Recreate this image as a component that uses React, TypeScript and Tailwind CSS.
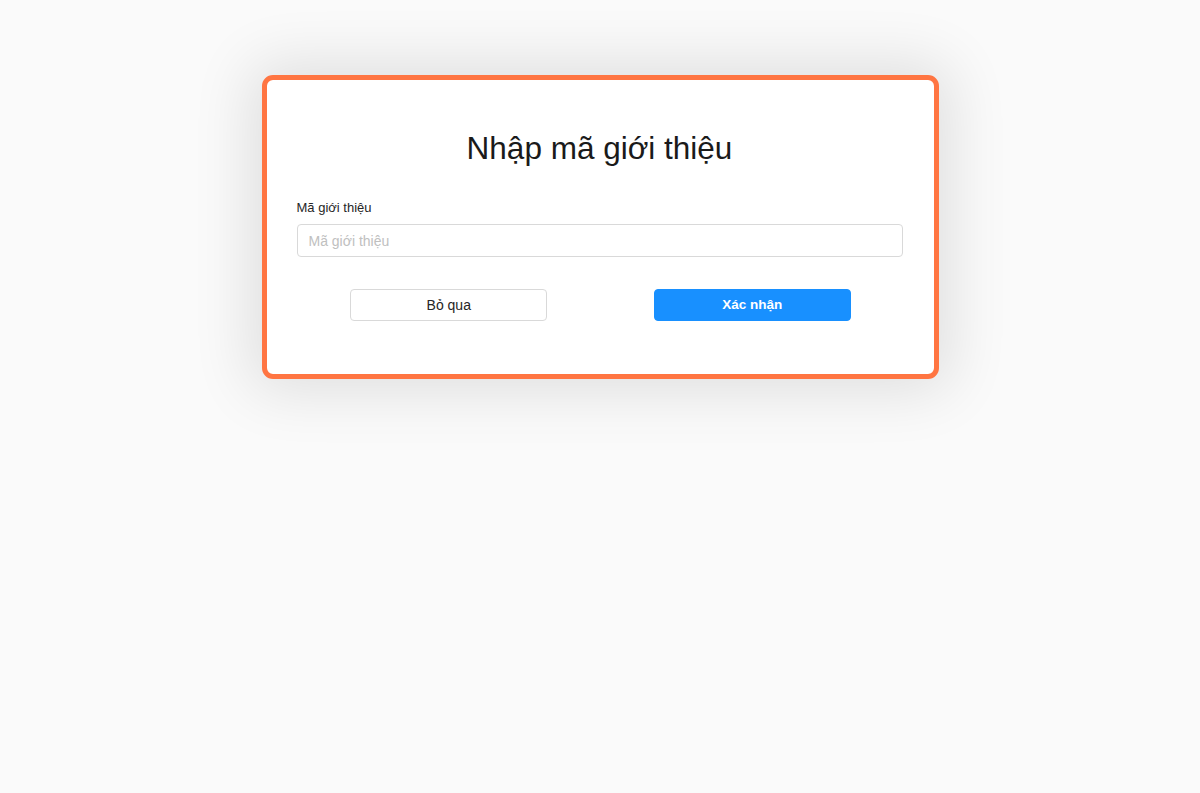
import React from "react";

export default function App() {
  return (
    <div className="min-h-[793px] w-full bg-[#fafafa] pt-[75px]" style={{ fontFamily: '"Liberation Sans", Arial, sans-serif' }}>
      <div className="mx-auto w-[677px] rounded-[11px] border-[5px] border-[#ff7542] bg-white pl-[30px] pr-[31px] pb-[53px] pt-[50px] shadow-[0_0_60px_12px_rgba(0,0,0,0.11)]">
        <h1 className="text-center text-[31.5px] leading-[36px] text-[#1a1a1a]">Nhập mã giới thiệu</h1>
        <div className="mt-[32px] text-[13px] leading-[20px] text-[#262626]">Mã giới thiệu</div>
        <input
          className="mt-[6px] block h-[33px] w-full rounded-[4px] border border-[#d9d9d9] px-[11px] text-[14px] outline-none placeholder:text-[#c0c0c0]"
          placeholder="Mã giới thiệu"
        />
        <div className="mt-[32px] grid grid-cols-2 gap-[3px] pl-[2px]">
          <div className="flex justify-center">
            <button className="h-[32px] w-[197px] rounded-[4px] border border-[#d9d9d9] bg-white text-[14px] text-[#262626]">Bỏ qua</button>
          </div>
          <div className="flex justify-center">
            <button className="h-[32px] w-[197px] rounded-[4px] border border-[#1890ff] bg-[#1890ff] text-[13.5px] font-bold text-white">Xác nhận</button>
          </div>
        </div>
      </div>
    </div>
  );
}
